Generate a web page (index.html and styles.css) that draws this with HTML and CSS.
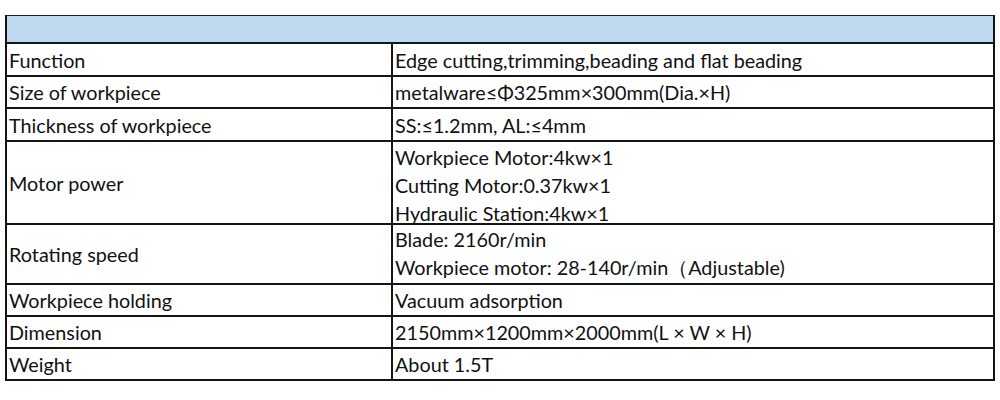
FILE: index.html
```html
<!DOCTYPE html>
<html>
<head>
<meta charset="utf-8">
<link rel="stylesheet" href="styles.css">
</head>
<body>
<div class="wrap">
<table class="spec">
  <colgroup><col class="c1"><col class="c2"></colgroup>
  <tr class="head"><td colspan="2"></td></tr>
  <tr class="r33"><td>Function</td><td>Edge cutting,trimming,beading and flat beading</td></tr>
  <tr class="r32"><td>Size of workpiece</td><td>metalware≤Φ325mm×300mm(Dia.×H)</td></tr>
  <tr class="r33"><td>Thickness of workpiece</td><td>SS:≤1.2mm, AL:≤4mm</td></tr>
  <tr class="r83"><td>Motor power</td><td class="multi"><div class="lines l3"><div>Workpiece Motor:4kw×1</div><div>Cutting Motor:0.37kw×1</div><div>Hydraulic Station:4kw×1</div></div></td></tr>
  <tr class="r60"><td>Rotating speed</td><td class="multi"><div class="lines l2"><div>Blade: 2160r/min</div><div>Workpiece motor: 28-140r/min（Adjustable)</div></div></td></tr>
  <tr class="r32"><td>Workpiece holding</td><td>Vacuum adsorption</td></tr>
  <tr class="r32"><td>Dimension</td><td>2150mm×1200mm×2000mm(L × W × H)</td></tr>
  <tr class="r32"><td>Weight</td><td>About 1.5T</td></tr>
</table>
</div>
</body>
</html>
```
FILE: styles.css
```css
html, body { margin: 0; padding: 0; background: #fff; }
.wrap { padding: 15px 5px 0 5px; }
.spec {
  width: 990px;
  border-collapse: collapse;
  table-layout: fixed;
  font-family: Lato, "Open Sans", "Liberation Sans", sans-serif;
  font-size: 19.8px;
  color: #111;
}
.c1 { width: 386px; }
.spec td {
  border: 2px solid #151515;
  padding: 0 0 0 2px;
  vertical-align: middle;
  line-height: 20px;
}
.head td {
  background: #bed8ef;
  height: 26px;
  border-top: 1px solid #222;
}
.r32 td { height: 30px; }
.r33 td { height: 31px; }
.r83 td { height: 81px; }
.r60 td { height: 58px; }
.spec td.multi { vertical-align: top; }
.lines { overflow: visible; }
.l3 { height: 81px; }
.l3 div { line-height: 28px; height: 28px; }
.l3 div:first-child { padding-top: 1px; }
.l3 div:last-child { height: 24px; }
.l2 { height: 58px; }
.l2 div { line-height: 28px; height: 28px; }
```
